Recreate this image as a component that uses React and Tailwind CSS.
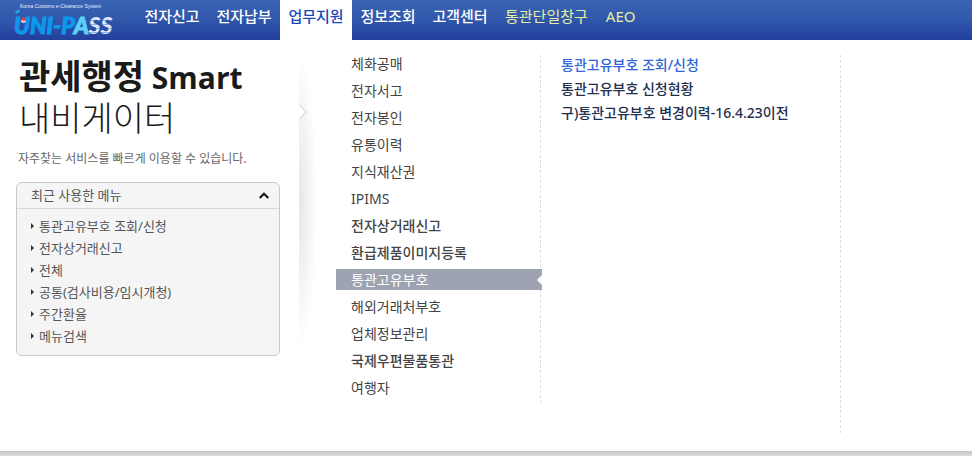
import { useState } from "react";
import clsx from "clsx";

const navItems = [
  { label: "전자신고" },
  { label: "전자납부" },
  { label: "업무지원", active: true },
  { label: "정보조회" },
  { label: "고객센터" },
  { label: "통관단일창구", highlight: true },
  { label: "AEO", highlight: true },
];

const recentItems = [
  "통관고유부호 조회/신청",
  "전자상거래신고",
  "전체",
  "공통(검사비용/임시개청)",
  "주간환율",
  "메뉴검색",
];

const menuItems = [
  { label: "체화공매" },
  { label: "전자서고" },
  { label: "전자봉인" },
  { label: "유통이력" },
  { label: "지식재산권" },
  { label: "IPIMS" },
  { label: "전자상거래신고", bold: true },
  { label: "환급제품이미지등록", bold: true },
  { label: "통관고유부호", active: true },
  { label: "해외거래처부호" },
  { label: "업체정보관리" },
  { label: "국제우편물품통관", bold: true },
  { label: "여행자" },
];

const subItems = [
  { label: "통관고유부호 조회/신청", active: true },
  { label: "통관고유부호 신청현황" },
  { label: "구)통관고유부호 변경이력-16.4.23이전" },
];

function Logo() {
  return (
    <svg width="120" height="40" viewBox="0 0 120 40" role="img" aria-label="UNI-PASS">
      <defs>
        <pattern id="stripes" y="1" width="4" height="4" patternUnits="userSpaceOnUse">
          <rect width="4" height="3" fill="#dfeafa" />
          <rect y="3" width="4" height="1" fill="#8fb2e2" />
        </pattern>
        <linearGradient id="line">
          <stop offset="0" stopColor="#12a5ee" />
          <stop offset="1" stopColor="#12a5ee" stopOpacity="0.35" />
        </linearGradient>
      </defs>
      <text
        x="20"
        y="8"
        fontSize="5"
        fill="#e6eefa"
        fontFamily="'Liberation Sans', sans-serif"
      >
        Korea Customs e-Clearance System
      </text>
      <path d="M18 11H112" stroke="url(#line)" strokeWidth="1" />
      <path d="M15 12l3-2 2 0.500-1 2-3 1z" fill="#19b5f5" />
      <text
        x="14"
        y="34"
        fontSize="23"
        fontWeight="900"
        fontStyle="italic"
        strokeWidth="1"
        fontFamily="Lato, 'Liberation Sans', sans-serif"
      >
        <tspan fill="#0f97ea" stroke="#0f97ea">UNI-P</tspan>
        <tspan fill="#5cd0f8" stroke="#5cd0f8">A</tspan>
        <tspan fill="url(#stripes)">SS</tspan>
      </text>
      <circle cx="23.500" cy="20" r="2.500" fill="#e8404a" />
      <path d="M21 20a2.500 2.500 0 0 0 5 0.500q-2.500 1-5-0.500z" fill="#d7e8fb" />
    </svg>
  );
}

function Header() {
  return (
    <header className="flex h-10 bg-linear-to-b from-[#3b64b4] via-[#3057ab] to-[#233f9c]">
      <a href="#" className="w-34 shrink-0">
        <Logo />
      </a>
      <nav className="flex">
        {navItems.map((item) => (
          <a
            key={item.label}
            href="#"
            className={clsx(
              "pt-1 text-center text-[15px] leading-6 whitespace-nowrap",
              item.active && "bg-white text-[#1648b8]",
              item.highlight ? "px-[9px] text-[#e6f0a0]" : "min-w-18 px-2 font-medium",
              !item.active && !item.highlight && "text-white",
            )}
          >
            {item.label}
          </a>
        ))}
      </nav>
    </header>
  );
}

function RecentMenu() {
  const [open, setOpen] = useState(true);

  return (
    <section className="mt-[13px] rounded-md border border-[#c8c8c8] bg-[#f5f5f5] text-[13px] text-[#555]">
      <button
        type="button"
        aria-expanded={open}
        onClick={() => setOpen(!open)}
        className="flex h-[26px] w-full cursor-pointer items-center justify-between border-b border-[#d6d6d6] pr-[10px] pl-[14px]"
      >
        최근 사용한 메뉴
        <svg
          width="10"
          height="7"
          viewBox="0 0 10 7"
          className={clsx(!open && "rotate-180")}
          aria-hidden="true"
        >
          <path d="M0.700 6L5 1.700L9.300 6" fill="none" stroke="#111" strokeWidth="2" />
        </svg>
      </button>
      {open && (
        <ul className="pt-[6px] pb-2">
          {recentItems.map((label) => (
            <li key={label}>
              <a href="#" className="flex items-center gap-[5px] pl-[14px] leading-[22px]">
                <svg width="3" height="6" viewBox="0 0 3 6" aria-hidden="true">
                  <path d="M0 0L3 3L0 6z" fill="#333" />
                </svg>
                {label}
              </a>
            </li>
          ))}
        </ul>
      )}
    </section>
  );
}

function Divider() {
  return (
    <div className="relative mt-4 h-[290px] w-[18px] bg-[radial-gradient(ellipse_at_left,#e6e6e6_0%,#f5f5f5_45%,#ffffff_72%)]">
      <svg
        width="9"
        height="16"
        viewBox="0 0 9 16"
        className="absolute top-12 left-0"
        aria-hidden="true"
      >
        <path d="M0 0.500L7.500 8L0 15.500" fill="#fff" stroke="#c4c4c4" />
      </svg>
    </div>
  );
}

export default function App() {
  return (
    <div className="bg-white font-['Noto_Sans','Noto_Sans_CJK_KR',sans-serif] text-[#444]">
      <Header />
      <main className="grid grid-cols-[299px_37px_205px_300px_1fr] pb-[18px]">
        <aside className="pt-[14px] pr-[19px] pl-4">
          <h1 className="pl-[3px] font-['Noto_Sans_CJK_KR',sans-serif] text-[34px] leading-[42px] whitespace-nowrap text-[#1a1a1a]">
            <strong className="block font-bold">
              관세행정{" "}
              <span className="font-['Open_Sans',sans-serif] text-[30px] leading-none">
                Smart
              </span>
            </strong>
            <span className="block font-light">내비게이터</span>
          </h1>
          <p className="mt-[11px] pl-[2px] text-xs leading-5 whitespace-nowrap text-[#666]">
            자주찾는 서비스를 빠르게 이용할 수 있습니다.
          </p>
          <RecentMenu />
        </aside>

        <Divider />

        <div className="mt-[15px] h-[348px] border-r border-dashed border-[#dedede]">
          <ul className="-mt-[2px] flex flex-col gap-[6px] text-sm">
            {menuItems.map((item) => (
              <li key={item.label}>
                <a
                  href="#"
                  className={clsx(
                    "relative block h-[21px] pl-[15px] leading-[21px]",
                    item.bold && "font-medium",
                    item.active && "-mr-[2px] bg-[#9da3b0] text-white",
                  )}
                >
                  {item.label}
                  {item.active && (
                    <svg
                      width="5"
                      height="10"
                      viewBox="0 0 5 10"
                      className="absolute top-[6px] right-0"
                      aria-hidden="true"
                    >
                      <path d="M5 0L0 5L5 10z" fill="#fff" />
                    </svg>
                  )}
                </a>
              </li>
            ))}
          </ul>
        </div>

        <div className="mt-[15px] h-[378px] border-r border-dashed border-[#dedede] pl-5">
          <ul className="-mt-[2px] text-sm font-medium text-[#1e2f4f]">
            {subItems.map((item) => (
              <li key={item.label}>
                <a
                  href="#"
                  className={clsx(
                    "block leading-6 whitespace-nowrap",
                    item.active && "text-[#2f66dc]",
                  )}
                >
                  {item.label}
                </a>
              </li>
            ))}
          </ul>
        </div>
      </main>
      <div className="h-[5px] bg-linear-to-b from-[#c4c4c4] to-[#dedede]" />
    </div>
  );
}
